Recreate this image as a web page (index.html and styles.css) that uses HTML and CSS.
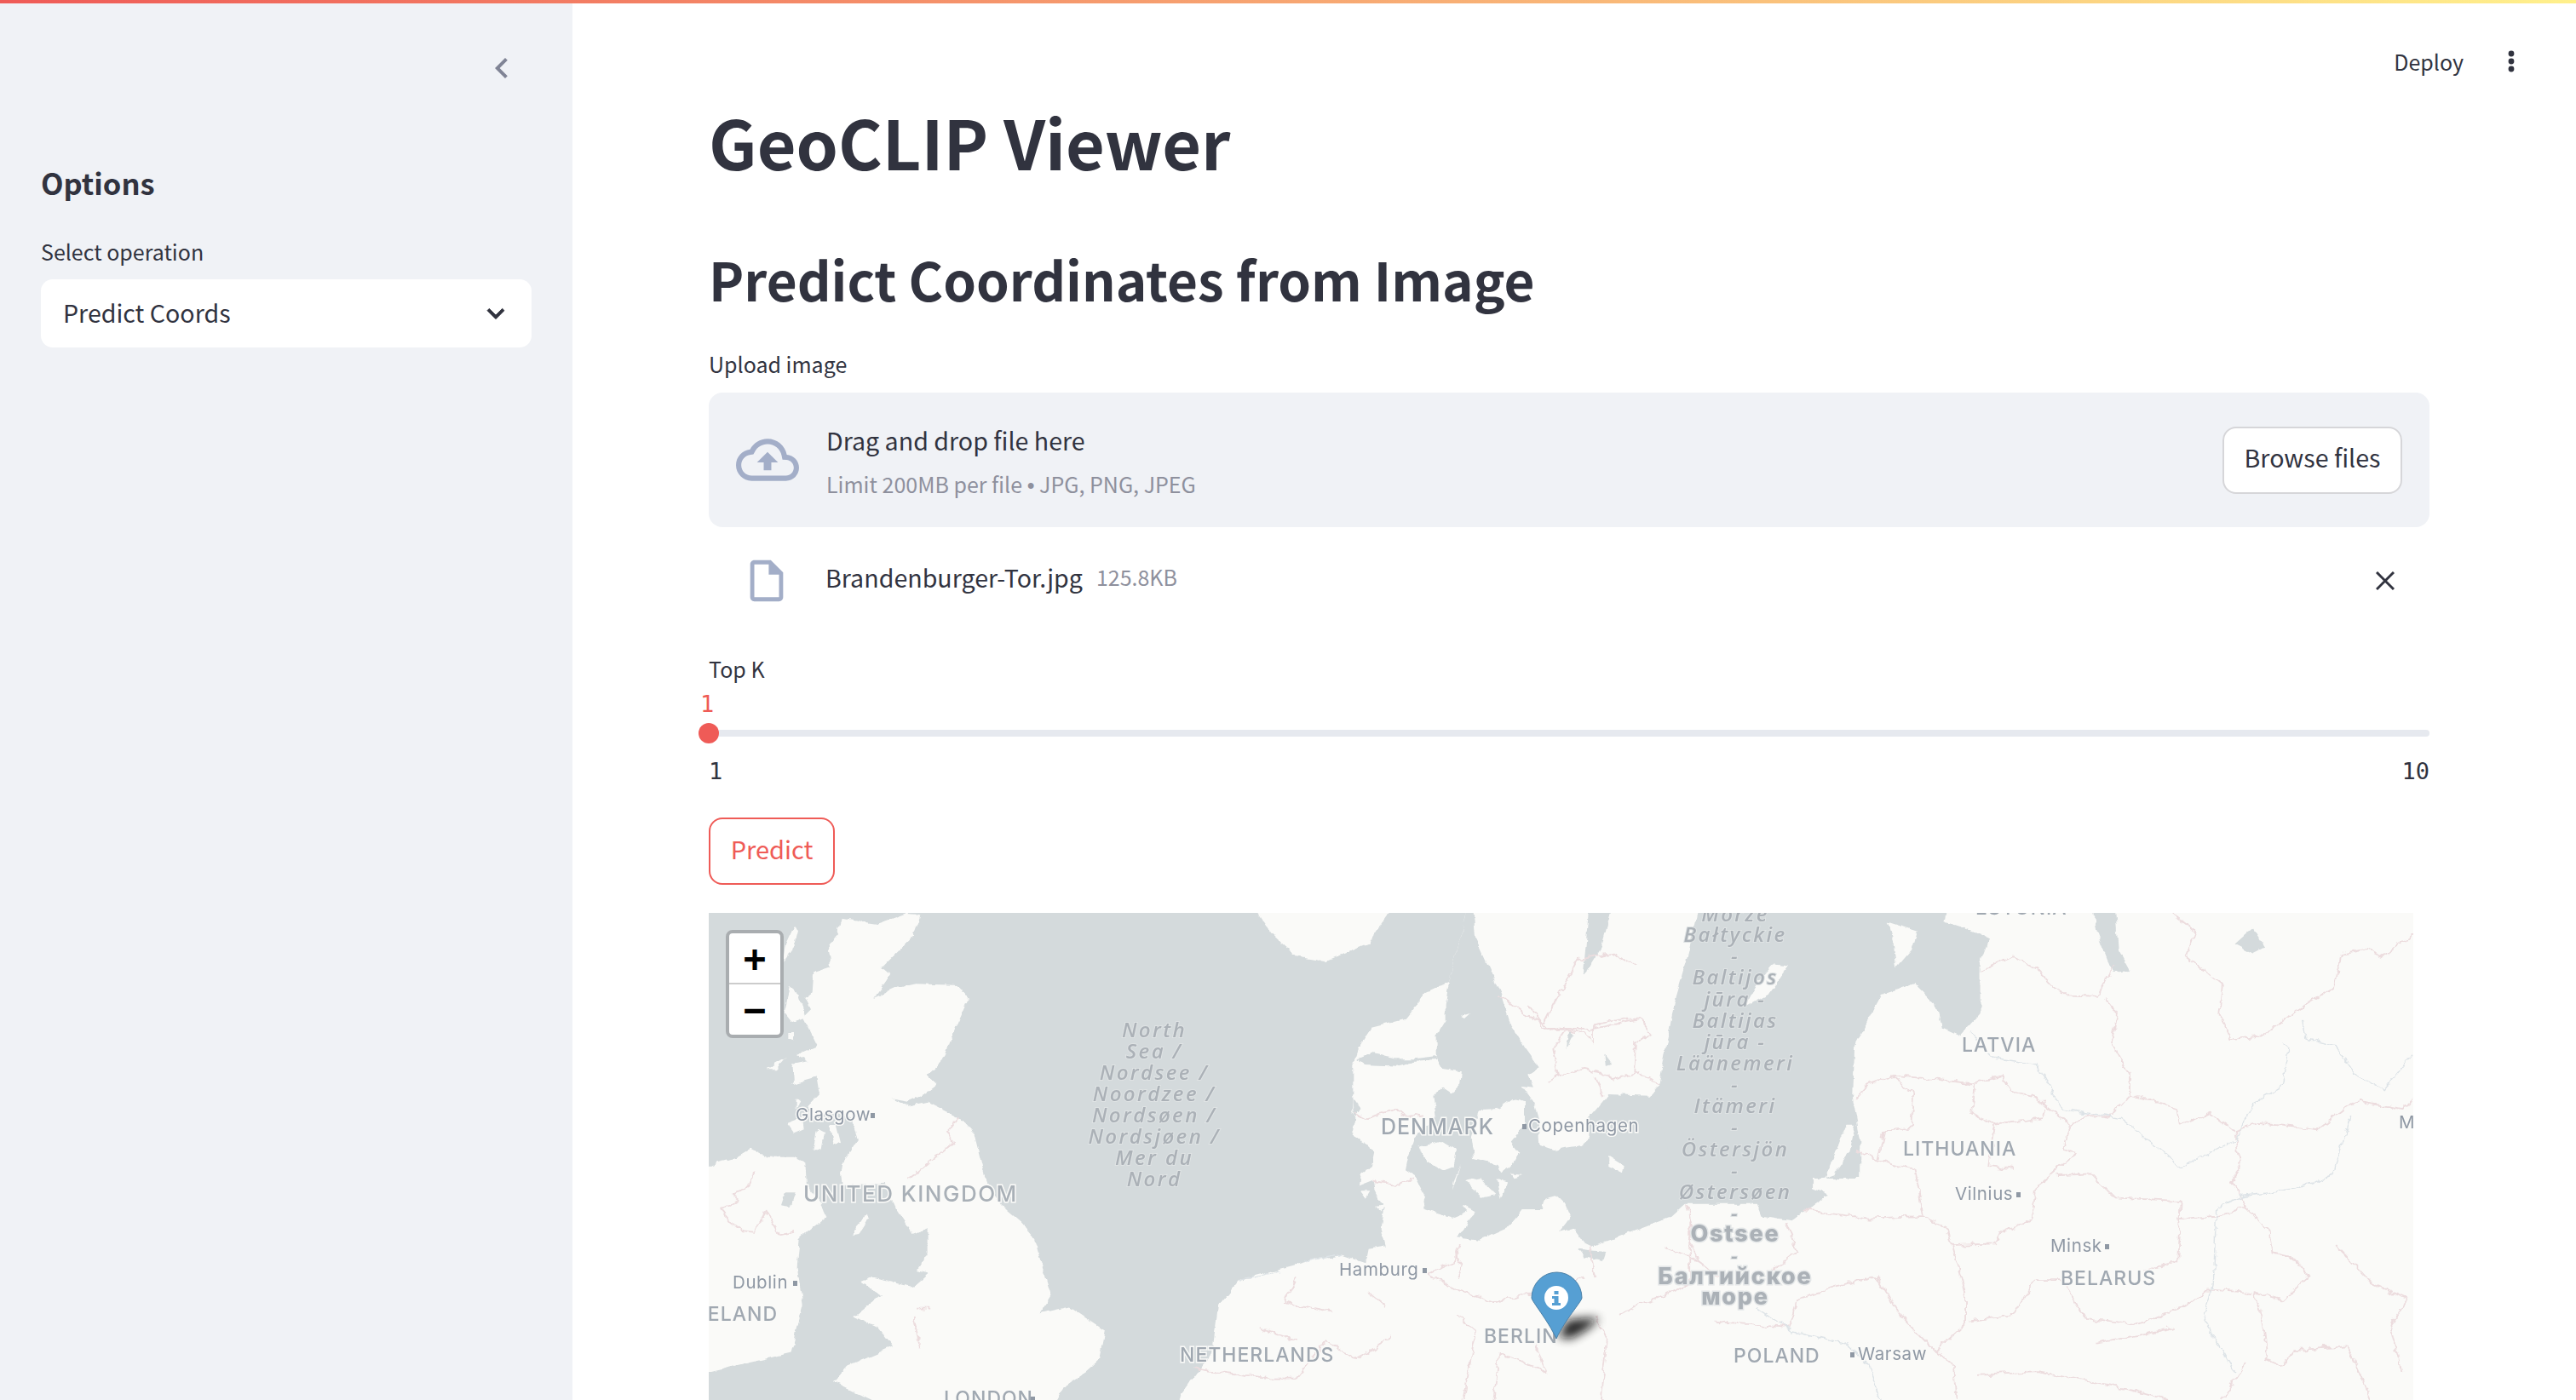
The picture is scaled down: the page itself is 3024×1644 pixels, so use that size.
FILE: index.html
```html
<!DOCTYPE html>
<html>
  <head>
    <title>GeoCLIP Viewer</title>
    <link rel="stylesheet" href="styles.css">
  </head>
  <body>
    <div class="top-stripe"></div>
    <div class="app">
      <aside class="sidebar">
        <div class="collapse-row">
          <svg class="collapse-icon" viewBox="0 0 24 24"><path d="M15.4 7.4 14 6l-6 6 6 6 1.4-1.4L10.8 12z"/></svg>
        </div>
        <h2 class="sidebar-title">Options</h2>
        <label class="sidebar-label">Select operation</label>
        <div class="select-box">
          <span class="select-text">Predict Coords</span>
          <svg class="select-arrow" viewBox="0 0 24 24"><path d="M7.4 8.6 12 13.2l4.6-4.6L18 10l-6 6-6-6z"/></svg>
        </div>
      </aside>

      <main class="main">
        <div class="toolbar">
          <span class="deploy">Deploy</span>
          <svg class="kebab" viewBox="0 0 8 26"><circle cx="4" cy="4" r="3.4"/><circle cx="4" cy="13" r="3.4"/><circle cx="4" cy="22" r="3.4"/></svg>
        </div>

        <div class="content">
          <h1 class="page-title">GeoCLIP Viewer</h1>
          <h2 class="section-title">Predict Coordinates from Image</h2>

          <label class="field-label upload-label">Upload image</label>
          <div class="uploader">
            <svg class="cloud-icon" viewBox="0 0 24 24"><path d="M19.35 10.04C18.67 6.59 15.64 4 12 4 9.11 4 6.6 5.64 5.35 8.04 2.34 8.36 0 10.91 0 14c0 3.31 2.69 6 6 6h13c2.76 0 5-2.24 5-5 0-2.64-2.05-4.78-4.65-4.96zM19 18H6c-2.21 0-4-1.79-4-4 0-2.05 1.53-3.76 3.56-3.97l1.07-.11.5-.95C8.08 7.14 9.94 6 12 6c2.62 0 4.88 1.86 5.39 4.43l.3 1.5 1.53.11c1.56.1 2.78 1.41 2.78 2.96 0 1.65-1.35 3-3 3zM8 13h2.55v3h2.9v-3H16l-4-4z"/></svg>
            <div class="uploader-text">
              <div class="drop-title">Drag and drop file here</div>
              <div class="drop-hint">Limit 200MB per file <span class="bullet">•</span> JPG, PNG, JPEG</div>
            </div>
            <button class="browse-btn">Browse files</button>
          </div>

          <div class="file-row">
            <svg class="file-icon" viewBox="0 0 24 24"><path d="M14 2H6c-1.1 0-1.99.9-1.99 2L4 20c0 1.1.89 2 1.99 2H18c1.1 0 2-.9 2-2V8l-6-6zM6 20V4h7v5h5v11H6z"/></svg>
            <span class="file-name">Brandenburger-Tor.jpg</span>
            <span class="file-size">125.8KB</span>
            <svg class="file-remove" viewBox="0 0 22 22"><path d="M1 1 21 21M21 1 1 21"/></svg>
          </div>

          <label class="field-label topk-label">Top K</label>
          <div class="slider-value">1</div>
          <div class="slider"><div class="slider-thumb"></div></div>
          <div class="slider-range"><span>1</span><span>10</span></div>

          <button class="predict-btn">Predict</button>

          <div class="map">
            <svg class="map-canvas" viewBox="0 0 2001 572">
              <defs>
                <filter id="shadow-blur" x="-60%" y="-100%" width="220%" height="300%"><feGaussianBlur stdDeviation="6"/></filter>
                <filter id="rough-coast" x="-2%" y="-4%" width="104%" height="108%">
                  <feTurbulence type="fractalNoise" baseFrequency="0.07" numOctaves="4" seed="7"/>
                  <feDisplacementMap in="SourceGraphic" scale="7" xChannelSelector="R" yChannelSelector="G"/>
                </filter>
                <filter id="rough-line" x="-2%" y="-4%" width="104%" height="108%">
                  <feTurbulence type="fractalNoise" baseFrequency="0.09" numOctaves="3" seed="3"/>
                  <feDisplacementMap in="SourceGraphic" scale="9" xChannelSelector="R" yChannelSelector="G"/>
                </filter>
              </defs>
              <rect class="sea" width="2001" height="572"/>

              <!-- coastlines, traced from crops of the reference -->
              <g filter="url(#rough-coast)">
                <!-- british isles -->
                <g transform="scale(.3333)">
                  <path class="land" d="M470 20 530 30 600 40 695 5 745 10 720 80 640 160 610 190 640 215 580 300 660 265 730 250 880 255 915 300 880 380 855 440 830 510 770 570 805 605 760 640 700 665 640 655 700 680 770 665 880 720 935 780 970 920 985 960 1030 1030 1101 1090 1143 1137 1206 1349 1168 1411 1269 1388 1395 1472 1374 1572 1311 1628 1248 1673 1206 1751 648 1751 438 1651 490 1595 648 1528 595 1461 511 1422 606 1349 532 1299 574 1282 722 1316 774 1271 732 1260 770 1200 770 1110 720 1130 660 1040 620 950 470 960 465 910 480 870 525 800 500 720 430 700 370 720 350 680 390 640 380 580 290 605 330 570 300 530 350 520 310 500 380 470 360 430 330 370 360 340 340 300 365 280 370 210 430 190 420 130 455 80z"/>
                  <path class="land" d="M-60 920 30 880 100 860 150 830 210 860 300 860 340 880 345 960 400 1030 415 1070 350 1120 320 1150 311 1249 332 1383 290 1550 6 1617 -60 1617z"/>
                  <path class="land" d="M285 260 320 290 340 370 300 385 265 340z"/>
                  <path class="land" d="M300 45 315 60 300 120 262 170 270 110z"/>
                  <path class="land" d="M295 530 385 570 300 600z"/>
                  <path class="land" d="M275 740 330 720 335 760 300 775z"/>
                  <path class="land" d="M305 650 320 650 305 690z"/>
                  <path class="land" d="M205 550 275 510 240 550z"/>
                  <path class="land" d="M370 840 385 760 405 770 395 830z"/>
                  <path class="land" d="M425 750 450 750 465 810 440 815z"/>
                  <path class="land" d="M280 420 300 420 300 445 280 440z"/>
                  <path class="land" d="M505 1135 555 1060 565 1075 530 1130z"/>
                  <path class="sea" d="M255 1030 270 985 305 985 290 1035z"/>
                </g>
                <!-- norway -->
                <g transform="translate(-12 -12) scale(.7018 .3724)">
                  <path class="land" d="M925 0 1165 0 1120 130 1050 185 1000 170 960 100z"/>
                </g>
                <!-- continent with everything east of jutland -->
                <g transform="translate(728 108) scale(.3333)">
                  <path class="land" d="M423 -81 327 -36 310 0 270 50 150 80 105 150 85 210 85 380 95 400 80 460 130 490 160 520 150 570 110 600 105 640 155 620 160 650 195 720 185 790 200 850 140 860 130 910 40 880 -72 903 -315 969 -390 1059 -411 1227 -558 1428 3900 1500 3900 -400 504 -400z"/>
                  <path class="sea" d="M423 -81 504 -400 516 -237 612 -24 640 70 690 150 740 220 700 245 720 290 680 285 720 340 740 410 745 495 790 510 890 495 920 470 915 400 965 340 985 315 1130 320 1165 280 1260 280 1260 695 1200 750 1000 825 930 850 890 830 860 790 810 800 850 750 830 700 800 670 760 680 750 720 680 720 630 785 530 830 450 820 480 790 490 760 515 730 470 705 490 730 440 750 360 725 330 715 345 680 300 600 270 580 280 530 300 470 380 390 370 320 400 290 430 310 460 280 465 235 400 225 380 190 380 100 410 50 410 0z"/>
                  <path class="sea" d="M100 190 150 170 230 190 300 190 380 180 380 195 300 200 240 215 130 210z"/>
                  <path class="sea" d="M85 330 115 370 90 395z"/>
                  <path class="land" d="M320 500 400 480 450 510 440 570 400 585 340 550z"/>
                  <path class="land" d="M500 470 530 370 600 365 650 330 690 340 690 420 640 480 670 520 640 570 610 595 590 560 510 540z"/>
                  <path class="land" d="M480 620 530 610 590 670 540 680z"/>
                  <path class="land" d="M590 610 630 625 605 690z"/>
                  <path class="land" d="M465 560 435 650 440 620z"/>
                  <path class="land" d="M640 595 685 600 650 610z"/>
                  <path class="land" d="M985 530 1040 565 1035 595 985 570z"/>
                  <path class="land" d="M1215 300 1225 200 1280 90 1250 180 1230 290z"/>
                  <path class="land" d="M465 40 500 30 480 48z"/>
                  <path class="land" d="M110 655 145 655 130 680z"/>
                  <path class="land" d="M165 710 200 705 185 730z"/>
                  <path class="sea" d="M850 90 860 110 835 160z"/>
                  <path class="sea" d="M970 170 1000 210 975 215z"/>
                  <path class="sea" d="M880 860 970 870 960 900 900 885z"/>
                </g>
                <!-- eastern baltic and lakes, x offset from the right-hand crop -->
                <g transform="translate(1068 -12) scale(.7018 .3724)">
                  <path class="sea" d="M135 0 115 170 95 300 68 572 60 620 110 950 232 950 240 990 290 1005 350 920 325 900 325 870 405 870 405 750 392 620 395 450 440 290 495 255 530 320 540 395 570 420 605 350 605 190 620 115 610 100 545 60 550 0z"/>
                  <path class="land" d="M260 195 285 200 250 290 210 330 230 260z"/>
                  <path class="land" d="M450 60 500 90 490 150 465 205 460 130z"/>
                  <path class="land" d="M381 700 396 700 386 790 361 860 346 870z"/>
                  <path class="sea" d="M791 0 830 0 836 150 855 215 826 220 801 100z"/>
                  <path class="sea" d="M1031 130 1061 80 1081 140 1061 160z"/>
                </g>
                <!-- swedish lakes -->
                <g transform="translate(-12 -12) scale(.7018 .3724)">
                  <path class="sea" d="M1490 0 1530 0 1510 140 1480 230z"/>
                </g>
              </g>

              <g filter="url(#rough-line)">
                <g transform="scale(.3333)">
                  <path class="border" d="M880 720 840 770 860 810 800 860 740 910 700 935M160 905 130 975 80 990 110 1010 40 1045 80 1090 120 1120 160 1125 200 1055 250 1135 300 1125"/>
                </g>
                <g transform="translate(728 108) scale(.3333)">
                  <path class="border" d="M155 620 250 635 300 610M90 380 130 400 180 380 240 365 270 395 330 385M810 250 895 225 960 240 1000 265 1080 235 1165 280M770 270 810 250 790 150 830 90 900 100 930 130 930 70 1040 50 1095 50 1135 100 1080 135 1075 235M700 0 770 90 830 80M940 250 965 320M465 840 445 890 470 920 450 960M920 850 925 900 940 960M1260 700 1280 790 1270 830 1300 900M1180 850 1300 900 1370 960"/>
                </g>
                <g transform="translate(-12 -12) scale(.7018 .3724)">
                  <path class="river" d="M1015 1130 1075 1110M905 1190 975 1165"/>
                  <path class="border" d="M365 1280 385 1280M360 1310 370 1400"/>
                  <path class="border" d="M1340 290 1380 350 1415 380 1470 180 1530 160 1568 200M1400 350 1410 400 1490 400 1568 370"/>
                  <path class="border" d="M1220 1170 1270 1220 1330 1260 1400 1230 1480 1180M1270 1080 1265 1130 1220 1170M1500 1300 1520 1380 1510 1568M1000 1180 980 1260 1060 1290M1160 1370 1100 1440 1050 1380 1000 1500 960 1500 830 1470M940 1340 1000 1380M1270 1300 1300 1350 1280 1568M1400 1400 1420 1480 1340 1420 1330 1568M1120 1225 1150 1270"/>
                </g>
                <g transform="translate(1068 -12) scale(.7018 .3724)">
                  <path class="border" d="M610 215 660 170 700 210 740 290 800 295 830 200M925 32 965 90 950 170 1010 260 1005 350 1025 430 1075 420 1150 320 1195 270 1210 160 1250 145 1280 170 1330 95M815 300 835 350 825 440 855 540 855 605M395 620 420 570 460 545 520 555 590 570 640 545 655 595 700 615 755 700M755 700 785 670 820 680 855 605 885 620 935 650 940 700 990 665 1030 720 1070 695 1110 700 1170 715 1215 650 1240 625 1310 650 1330 620"/>
                  <path class="border" d="M1030 720 1040 830 1025 880 1050 960 1090 1040 1095 1105 1130 1120 1155 1180 1110 1255 1065 1230 1080 1340 1085 1440 1110 1460 1130 1410 1220 1400 1260 1568M310 970 420 995 510 988 550 1030 580 1240 580 1330 530 1415 560 1460 565 1568M510 988 500 880 495 840 430 810 400 780M755 700 745 780 765 790 720 860 700 890 690 1000 640 1040 630 1075 555 1080"/>
                  <path class="border" d="M730 860 790 855 830 930 940 940 935 1130 880 1160M935 1000 1000 990 1050 960M695 1190 740 1190 780 1310 870 1330 950 1270 985 1220 1060 1230M695 1190 660 1300 585 1320M430 1175 470 1300 530 1415M430 1175 300 1250 285 1340 160 1320M280 1010 300 1100 250 1170M120 1010 120 1200 60 1250 0 1300M455 545 495 600 490 710 445 720 435 810M595 570 590 670 630 700 710 680 715 650M630 700 620 830 660 840M1200 1080 1260 1200 1320 1250 1290 1330 1310 1480M1050 1450 1010 1568M600 1490 700 1480 820 1520 920 1568M930 1340 800 1390"/>
                  <path class="river" d="M840 680 900 770 940 835 1030 750 1065 630 1110 580 1120 460 1110 440M1045 925 1130 905 1195 860 1225 670M1045 925 1000 960 995 1200M1145 370 1150 430 1200 450 1230 540 1280 590 1328 480M590 410 630 490 700 510 740 650 840 680M230 1280 290 1350 380 1390 420 1460 440 1568M995 1200 980 1320 1030 1480"/>
                </g>
              </g>

              <!-- place names -->
              <g class="sea-name">
                <text x="523" y="146">North</text>
                <text x="523" y="171">Sea /</text>
                <text x="523" y="196">Nordsee /</text>
                <text x="523" y="221">Noordzee /</text>
                <text x="523" y="246">Nordsøen /</text>
                <text x="523" y="271">Nordsjøen /</text>
                <text x="523" y="296">Mer du</text>
                <text x="523" y="321">Nord</text>
                <text x="1205" y="10">Morze</text>
                <text x="1205" y="34">Bałtyckie</text>
                <text x="1205" y="59">-</text>
                <text x="1205" y="84">Baltijos</text>
                <text x="1205" y="110">jūra -</text>
                <text x="1205" y="135">Baltijas</text>
                <text x="1205" y="160">jūra -</text>
                <text x="1205" y="185">Läänemeri</text>
                <text x="1205" y="210">-</text>
                <text x="1205" y="235">Itämeri</text>
                <text x="1205" y="260">-</text>
                <text x="1205" y="286">Östersjön</text>
                <text x="1205" y="311">-</text>
                <text x="1205" y="336">Østersøen</text>
                <text x="1205" y="361">-</text>
                <text class="sea-name-bold" x="1205" y="386">Ostsee</text>
                <text x="1205" y="411">-</text>
                <text class="sea-name-bold" x="1205" y="436">Балтийское</text>
                <text class="sea-name-bold" x="1205" y="460">море</text>
              </g>
              <g class="country-name">
                <text x="111" y="339" class="name-large">UNITED KINGDOM</text>
                <text x="789" y="260" class="name-tight">DENMARK</text>
                <text x="81" y="479" text-anchor="end">IRELAND</text>
                <text x="553" y="527">NETHERLANDS</text>
                <text x="910" y="505">BERLIN</text>
                <text x="276" y="578">LONDON</text>
                <text x="1471" y="163">LATVIA</text>
                <text x="1402" y="285">LITHUANIA</text>
                <text x="1587" y="437">BELARUS</text>
                <text x="1203" y="528">POLAND</text>
                <text x="1487" y="2">ESTONIA</text>
              </g>
              <g class="city-name">
                <text x="962" y="257">Copenhagen</text>
                <text x="102" y="244">Glasgow</text>
                <text x="740" y="426">Hamburg</text>
                <text x="28" y="441">Dublin</text>
                <text x="1463" y="337">Vilnius</text>
                <text x="1575" y="398">Minsk</text>
                <text x="1349" y="525">Warsaw</text>
                <text x="1984" y="253">M</text>
              </g>
              <g class="city-dot">
                <rect x="955" y="248" width="5" height="6"/>
                <rect x="190" y="235" width="5" height="6"/>
                <rect x="838" y="417" width="5" height="6"/>
                <rect x="99" y="432" width="5" height="6"/>
                <rect x="1535" y="328" width="5" height="6"/>
                <rect x="1639" y="389" width="5" height="6"/>
                <rect x="1340" y="516" width="5" height="6"/>
                <rect x="378" y="568" width="5" height="4"/>
              </g>

              <!-- marker -->
              <path class="marker-shadow" d="M997 498 1008 478 1030 476 1046 476 1030 490 1012 500z" filter="url(#shadow-blur)"/>
              <path class="marker-pin" d="M995 500C985 478 966 456 966 452A29.5 30 0 1 1 1025 452C1025 456 1005 478 995 500z"/>
              <circle class="marker-dot" cx="995" cy="452" r="14"/>
              <path class="marker-glyph" d="M992.5 444h5v4h-5zM990 450h7.5v8h2.5v3h-10v-3h2.5v-5h-2.5z"/>
            </svg>
            <div class="zoom-control">
              <a class="zoom-btn zoom-in">+</a>
              <a class="zoom-btn">−</a>
            </div>
          </div>
        </div>
      </main>
    </div>
  </body>
</html>
```

FILE: styles.css
```css
* {
  box-sizing: border-box;
}
html,
body {
  height: 100%;
  margin: 0;
  overflow: hidden;
}
body {
  background-color: #fff;
  color: #31333f;
  font-family: "Noto Sans CJK SC", "Source Sans Pro", sans-serif;
  font-size: 28.6px;
  display: flex;
  flex-direction: column;
}
.top-stripe {
  height: 4px;
  flex: none;
  background: linear-gradient(90deg, #ef5b57, #fff08c);
}
.app {
  flex: 1;
  display: flex;
  min-height: 0;
}

/* sidebar */
.sidebar {
  width: 672px;
  flex: none;
  background-color: #f0f2f6;
  padding: 0 48px;
}
.collapse-row {
  display: flex;
  justify-content: flex-end;
  margin: 52px 0 0;
  height: 48px;
}
.collapse-icon {
  width: 48px;
  height: 48px;
  margin-right: 11px;
  fill: #808495;
}
.sidebar-title {
  margin: 85px 0 0;
  font-size: 34.5px;
  font-weight: 600;
  line-height: 50px;
}
.sidebar-label {
  display: block;
  margin-top: 36px;
  font-size: 25px;
  line-height: 40px;
}
.select-box {
  margin-top: 13px;
  height: 80px;
  background-color: #fff;
  border-radius: 14px;
  padding: 0 22px 0 26px;
  display: flex;
  align-items: center;
  justify-content: space-between;
}
.select-text {
  margin-bottom: 4px;
}
.select-arrow {
  width: 40px;
  height: 40px;
  fill: #31333f;
  stroke: #31333f;
  stroke-width: .5;
}

/* main column */
.main {
  flex: 1;
  min-width: 0;
}
.toolbar {
  height: 116px;
  padding: 20px 72px 0 0;
  display: flex;
  justify-content: flex-end;
  align-items: center;
  gap: 52px;
}
.deploy {
  font-size: 25px;
}
.kebab {
  width: 8px;
  height: 26px;
  fill: #31333f;
}
.content {
  padding: 0 172px 0 160px;
}
.page-title {
  margin: -4px 0 0;
  font-size: 79px;
  font-weight: 700;
  line-height: 100px;
}
.section-title {
  margin: 66px 0 0;
  font-size: 62px;
  font-weight: 600;
  line-height: 90px;
}
.field-label {
  display: block;
  font-size: 25px;
  line-height: 40px;
}
.upload-label {
  margin-top: 35px;
}
.uploader {
  margin-top: 14px;
  height: 158px;
  background-color: #f0f2f6;
  border-radius: 16px;
  padding: 0 32px;
  display: flex;
  align-items: center;
}
.cloud-icon {
  width: 74px;
  height: 74px;
  fill: #a3aec8;
  flex: none;
}
.uploader-text {
  margin-left: 32px;
  padding-top: 5px;
  flex: 1;
}
.drop-title {
  line-height: 44px;
}
.drop-hint {
  margin-top: 9px;
  font-size: 25px;
  line-height: 40px;
  color: #8e909d;
}
.bullet {
  font-family: "Liberation Sans", sans-serif;
}
.browse-btn {
  width: 211px;
  height: 79px;
  padding: 0 0 8px;
  background-color: #fff;
  border: 2px solid #d6d6d9;
  border-radius: 16px;
  color: #31333f;
  font-family: inherit;
  font-size: 28.6px;
}
.file-row {
  margin-top: 23px;
  height: 80px;
  padding: 0 41px 0 40px;
  display: flex;
  align-items: center;
}
.file-icon {
  width: 58px;
  height: 58px;
  margin-left: -1px;
  fill: #a3aec8;
  flex: none;
}
.file-name {
  margin: 0 0 10px 40px;
}
.file-size {
  margin: 0 0 10px 16px;
  font-size: 25px;
  color: #8e909d;
}
.file-remove {
  margin-left: auto;
  width: 22px;
  height: 22px;
  fill: none;
  stroke: #31333f;
  stroke-width: 3;
}
.topk-label {
  margin-top: 43px;
}

/* slider */
.slider-value {
  margin: 7px 0 0 -10px;
  font-family: "DejaVu Sans Mono", monospace;
  font-size: 27px;
  line-height: 30px;
  color: #ef5b57;
}
.slider {
  position: relative;
  margin-top: 7px;
  height: 24px;
  display: flex;
  align-items: center;
}
.slider::before {
  content: "";
  flex: 1;
  height: 8px;
  background-color: #e6e9ef;
  border-radius: 4px;
}
.slider-thumb {
  position: absolute;
  left: -12px;
  top: 0;
  width: 24px;
  height: 24px;
  border-radius: 50%;
  background-color: #ef5b57;
}
.slider-range {
  margin-top: 18px;
  display: flex;
  justify-content: space-between;
  font-family: "DejaVu Sans Mono", monospace;
  font-size: 27px;
  line-height: 30px;
}
.predict-btn {
  display: block;
  margin-top: 39px;
  width: 148px;
  height: 79px;
  padding: 0 0 8px;
  background-color: #fff;
  border: 2px solid #ef5b57;
  border-radius: 16px;
  color: #ef5b57;
  font-family: inherit;
  font-size: 29px;
}

/* map */
.map {
  position: relative;
  margin-top: 33px;
  width: 2001px;
  height: 572px;
  overflow: hidden;
}
.map-canvas {
  display: block;
  width: 2001px;
  height: 572px;
}
.sea {
  fill: #d4dadc;
}
.land {
  fill: #fafaf8;
}
.border {
  fill: none;
  stroke: #ecdcde;
  stroke-width: 1.8;
  stroke-linejoin: round;
  vector-effect: non-scaling-stroke;
}
.river {
  fill: none;
  stroke: #dde3e7;
  stroke-width: 1.4;
  vector-effect: non-scaling-stroke;
}
.sea-name text {
  font-family: "Open Sans", sans-serif;
  font-size: 24px;
  font-style: italic;
  font-weight: 600;
  letter-spacing: 2.4px;
  text-anchor: middle;
  fill: #abb1b7;
  stroke: #dfe3e4;
  stroke-width: 2px;
  paint-order: stroke;
}
.sea-name .sea-name-bold {
  font-family: Inter, sans-serif;
  font-size: 27px;
  font-style: normal;
  font-weight: 800;
  letter-spacing: 1.8px;
  stroke: #e4e7e8;
  stroke-width: 3px;
}
.country-name text {
  font-family: Inter, sans-serif;
  font-size: 23px;
  font-weight: 500;
  letter-spacing: 1px;
  fill: #a0a8b1;
  stroke: #fafaf8;
  stroke-width: 3px;
  paint-order: stroke;
}
.country-name .name-large {
  font-size: 26px;
  letter-spacing: 1.5px;
  fill: #a9b0b7;
}
.country-name .name-tight {
  font-size: 25px;
  letter-spacing: 1px;
}
.city-name text {
  font-family: Inter, sans-serif;
  font-size: 20.5px;
  letter-spacing: .6px;
  fill: #8f98a4;
  stroke: #fafaf8;
  stroke-width: 3px;
  paint-order: stroke;
}
.city-dot {
  fill: #8f98a4;
}
.marker-shadow {
  fill: #111;
  opacity: .9;
}
.marker-pin {
  fill: #569fd3;
  stroke: #4a7fa6;
  stroke-width: 1;
}
.marker-dot {
  fill: #fff;
}
.marker-glyph {
  fill: #569fd3;
}
.zoom-control {
  position: absolute;
  left: 20px;
  top: 20px;
  width: 68px;
  border: 4px solid #a9adb0;
  border-radius: 8px;
  background-color: #fff;
}
.zoom-btn {
  display: block;
  height: 59px;
  line-height: 59px;
  text-align: center;
  font-family: "DejaVu Sans Mono", monospace;
  font-weight: 700;
  font-size: 44px;
  color: #000;
}
.zoom-in {
  height: 60px;
  border-bottom: 2px solid #ccc;
}
```
